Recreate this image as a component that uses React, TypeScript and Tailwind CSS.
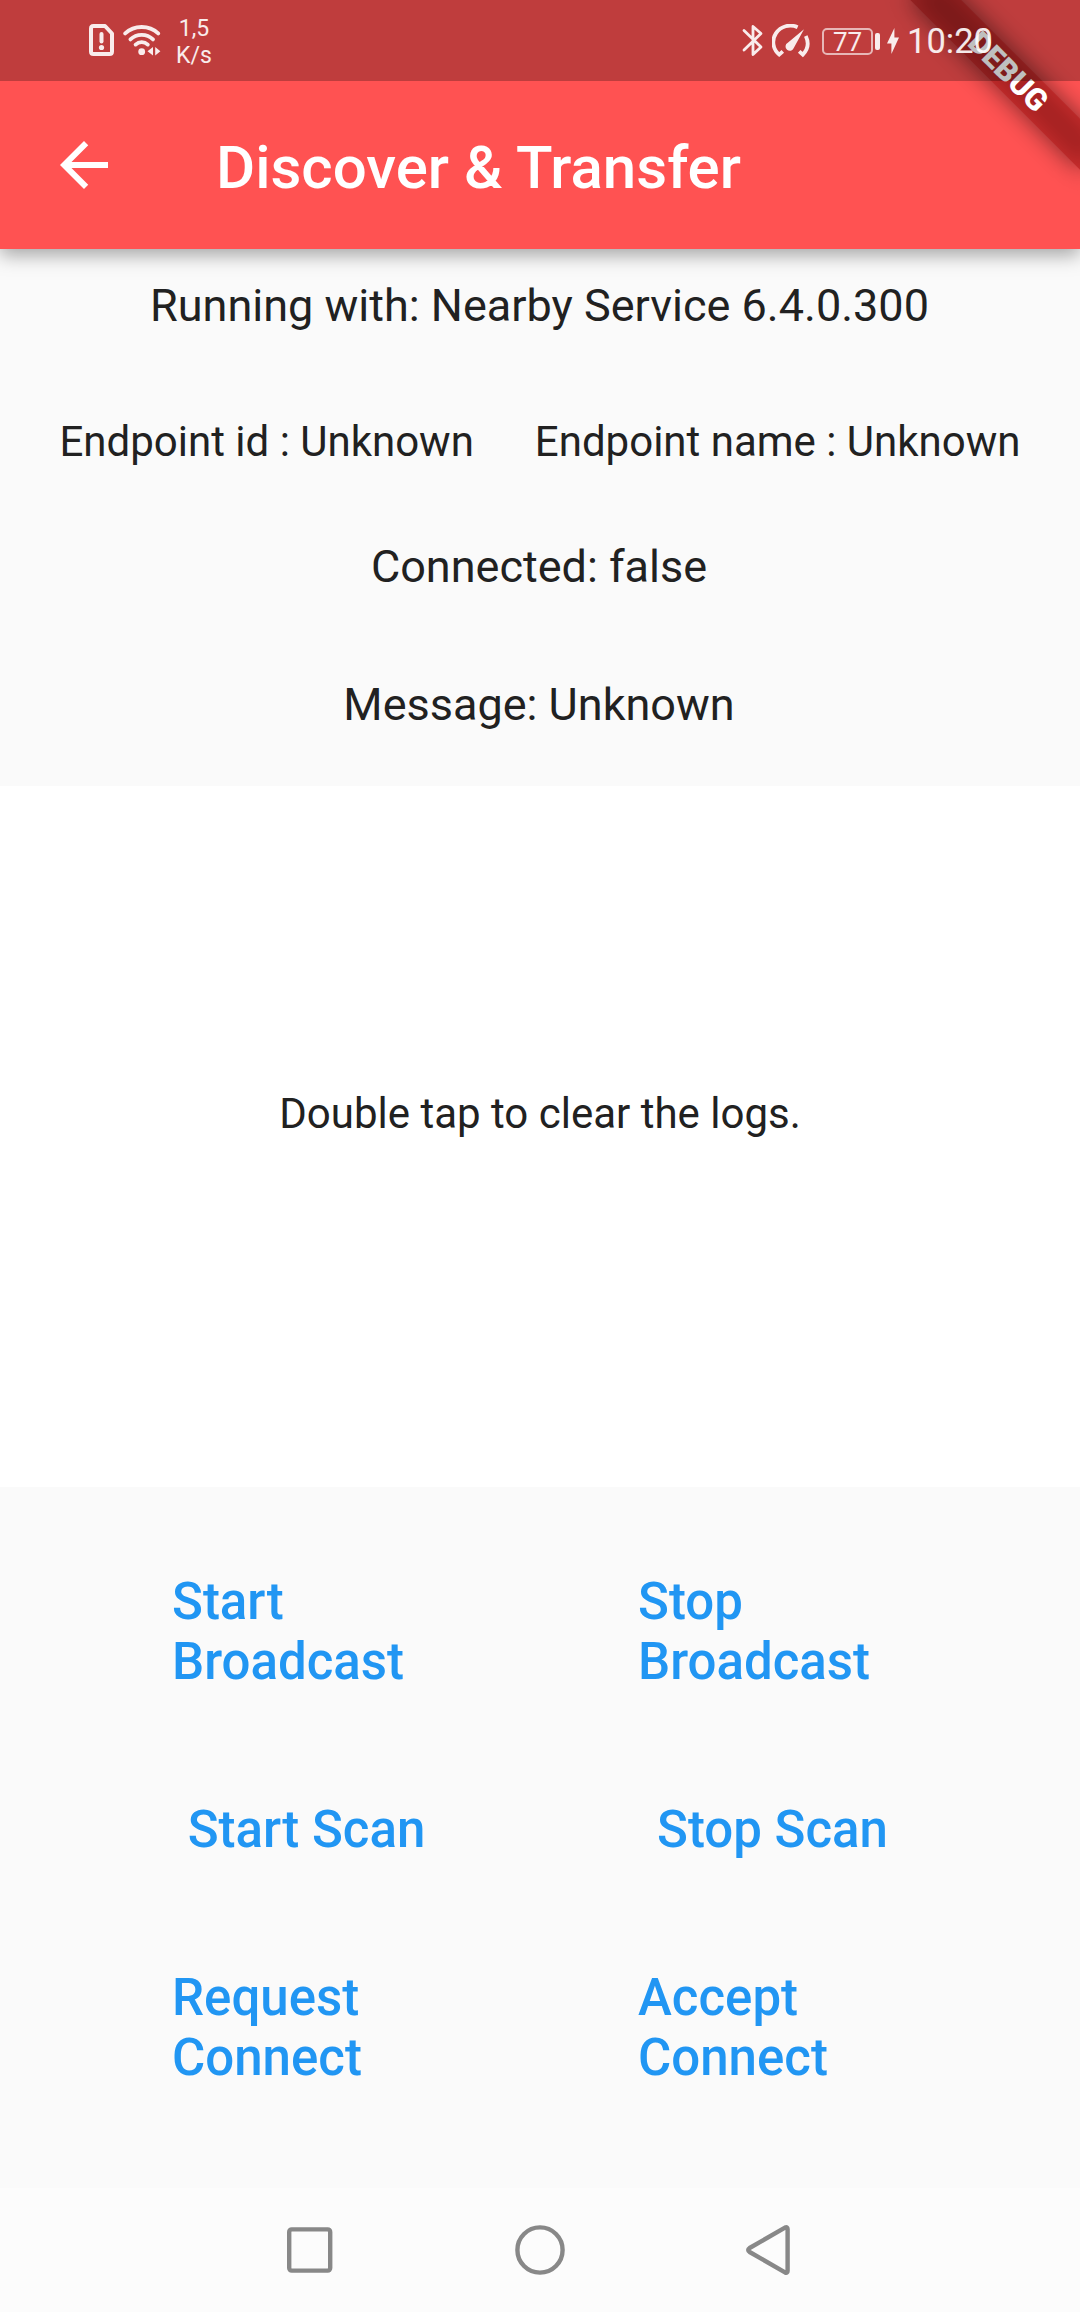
import React from "react";

function SimAlertIcon() {
  return (
    <svg className="h-[32px] w-[25px]" viewBox="0 0 25 32" fill="none">
      <path d="M4.5 2H16L23 9.5V27.5Q23 30 20.5 30H4.5Q2 30 2 27.5V4.5Q2 2 4.5 2Z" stroke="currentColor" strokeWidth="4" strokeLinejoin="round" />
      <path d="M12.5 10V17.5" stroke="currentColor" strokeWidth="4" strokeLinecap="round" />
      <circle cx="12.5" cy="23.5" r="2.6" fill="currentColor" />
    </svg>
  );
}

function WifiIcon() {
  return (
    <svg className="h-[31px] w-[38px]" viewBox="0 0 38 31" fill="none">
      <g stroke="currentColor" strokeWidth="3.8" strokeLinecap="round">
        <path d="M2.2 8.4Q9 2 18.7 2T35.2 8.4" />
        <path d="M7.4 14.4Q12 9.8 18.7 9.8T30 14.4" />
        <path d="M12.6 19.6Q15.2 17.2 18.7 17.2T24.8 19.6" />
      </g>
      <circle cx="18.7" cy="26.7" r="3.4" fill="currentColor" />
      <path d="M30 22V30.6L24.5 26.3ZM32.2 22L37.4 26.3L32.2 30.6Z" fill="currentColor" />
    </svg>
  );
}

function BluetoothIcon() {
  return (
    <svg className="h-[33px] w-[21px]" viewBox="0 0 21 33" fill="none">
      <path d="M2 6.5L19 23L11 30.5V2.5L19 9.5L2 26" stroke="currentColor" strokeWidth="2.8" strokeLinejoin="round" strokeLinecap="round" />
    </svg>
  );
}

function GaugeIcon() {
  return (
    <svg className="h-[34px] w-[39px]" viewBox="0 0 39 34" fill="none">
      <g stroke="currentColor" strokeWidth="3.8">
        <path d="M25.6 3.2A17 16.5 0 0 0 7.2 30.6L10.8 27.4" />
        <path d="M33.8 12Q38.8 22.4 30.8 30.6L27.2 27.4" />
      </g>
      <path d="M32 5.2L15.8 18.7A4.3 4.3 0 1 0 21.9 23.8Z" fill="currentColor" />
    </svg>
  );
}

function BoltIcon() {
  return (
    <svg className="h-[26px] w-[12px]" viewBox="0 0 12 26">
      <path d="M7.4 0V9.4H12L4.4 26V15.5H0Z" fill="currentColor" />
    </svg>
  );
}

function DebugBanner() {
  return (
    <div className="absolute top-0 right-0 h-[249px] w-[249px] overflow-hidden">
      <div className="absolute top-0 left-[249px] h-0 w-0 rotate-45">
        <div className="absolute top-[84px] left-[-120px] h-9 w-60 bg-black/50 blur-[12px]" />
        <div className="absolute top-[84px] left-[-120px] h-9 w-60 bg-[#b71c1c]/63 text-center text-[30.6px] leading-9 font-black text-white">
          DEBUG
        </div>
      </div>
    </div>
  );
}

function StatusBar() {
  return (
    <div className="absolute top-0 left-0 flex h-[81px] w-full justify-between bg-black/25 text-white/90">
      <div className="flex items-start pl-[89px]">
        <div className="pt-6">
          <SimAlertIcon />
        </div>
        <div className="pt-[25px] pl-[9px]">
          <WifiIcon />
        </div>
        <div className="ml-[15px] w-[36px] pt-[15px] text-center text-[23px] leading-[27px]">
          <div>1,5</div>
          <div>K/s</div>
        </div>
      </div>
      <div className="flex items-start">
        <div className="pt-6">
          <BluetoothIcon />
        </div>
        <div className="ml-[9px] pt-6">
          <GaugeIcon />
        </div>
        <div className="mt-7 ml-[11px] h-[27px] w-[51px] rounded-[5px] border-2 border-current/70 text-center text-[26px] leading-[24px]">
          77
        </div>
        <div className="mt-[33px] ml-[2px] h-[17px] w-[5px] rounded-[2px] bg-current" />
        <div className="mt-[28px] ml-[7px]">
          <BoltIcon />
        </div>
        <div className="w-[181px] pt-[21px] pl-[8px] text-[34.5px] leading-[41px]">10:20</div>
      </div>
    </div>
  );
}

function AppBar() {
  return (
    <header className="relative z-10 h-[249px] bg-[#ff5252] pt-[81px] text-white shadow-[0_6px_18px_rgba(0,0,0,0.35)]">
      <div className="flex h-[168px] items-center pl-12">
        <svg className="h-[72px] w-[72px]" viewBox="0 0 24 24" fill="currentColor">
          <path d="M20 11H7.83l5.59-5.59L12 4l-8 8 8 8 1.41-1.41L7.83 13H20v-2z" />
        </svg>
        <h1 className="ml-24 pt-[5px] text-[60px] leading-[70px] font-medium">Discover &amp; Transfer</h1>
      </div>
      <DebugBanner />
      <StatusBar />
    </header>
  );
}

function ActionButton({ children }: { children: React.ReactNode }) {
  return (
    <button className="flex h-[198px] w-[269px] items-center justify-center text-left text-[51px] leading-[60px] font-medium text-[#2196f3]">
      <span>{children}</span>
    </button>
  );
}

function NavBar() {
  return (
    <nav className="flex h-[124px] items-center justify-center gap-[178px] bg-[#fcfcfc] text-[#888888]">
      <svg className="h-[52px] w-[52px]" viewBox="0 0 52 52" fill="none" stroke="currentColor" strokeWidth="4.4">
        <rect x="5.2" y="5.4" width="41" height="41.2" rx="2.5" />
      </svg>
      <svg className="h-[52px] w-[52px]" viewBox="0 0 52 52" fill="none" stroke="currentColor" strokeWidth="4.4">
        <circle cx="26" cy="26" r="22.6" />
      </svg>
      <svg className="h-[52px] w-[52px]" viewBox="0 0 52 52" fill="none" stroke="currentColor" strokeWidth="4.4" strokeLinejoin="round">
        <path d="M41 3.6Q43.6 2.4 43.6 5V47Q43.6 49.6 41 48.4L5.6 28Q2.8 26 5.6 24Z" />
      </svg>
    </nav>
  );
}

export default function App() {
  return (
    <div className="flex h-[2312px] w-[1080px] flex-col overflow-hidden bg-[#fafafa] font-['Roboto',sans-serif] text-[#212121]">
      <AppBar />
      <section className="flex h-[537px] flex-col items-center pt-[30px] text-[45px] leading-[53px]">
        <p className="pr-px">Running with: Nearby Service 6.4.0.300</p>
        <div className="mt-[85px] flex w-full justify-around px-[29px] text-[42px] leading-[49px]">
          <p>Endpoint id : Unknown</p>
          <p>Endpoint name : Unknown</p>
        </div>
        <p className="mt-[74px] pr-0.5">Connected: false</p>
        <p className="mt-[85px] pr-0.5">Message: Unknown</p>
      </section>
      <section className="h-[701px] bg-white pt-[303px] text-center text-[42px] leading-[49px]">
        Double tap to clear the logs.
      </section>
      <section className="grid h-[701px] grid-cols-[269px_269px] content-start gap-x-[197px] pt-[46px] pl-[172px]">
        <ActionButton>Start Broadcast</ActionButton>
        <ActionButton>Stop Broadcast</ActionButton>
        <ActionButton>Start Scan</ActionButton>
        <ActionButton>Stop Scan</ActionButton>
        <ActionButton>Request Connect</ActionButton>
        <ActionButton>Accept Connect</ActionButton>
      </section>
      <NavBar />
    </div>
  );
}
